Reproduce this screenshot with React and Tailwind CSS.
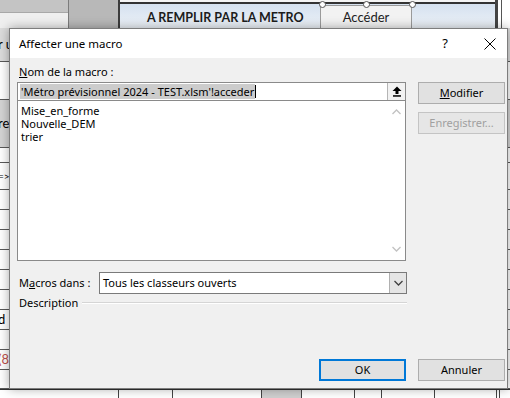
import React from 'react';

const leftRows = [
  { h: 34, bg: 'bg-[#dcdcdc]', text: 'r u', cls: 'text-black' },
  { h: 38, bg: 'bg-white', text: '', cls: '' },
  { h: 48, bg: 'bg-[#d4d4d4]', text: 're', cls: 'text-black' },
  { h: 15, bg: 'bg-white', text: '', cls: '' },
  { h: 27, bg: 'bg-white', text: '=>', cls: 'text-black text-[10px]' },
  { h: 20, bg: 'bg-white', text: '', cls: '' },
  { h: 20, bg: 'bg-white', text: '', cls: '' },
  { h: 20, bg: 'bg-white', text: '', cls: '' },
  { h: 20, bg: 'bg-white', text: '', cls: '' },
  { h: 20, bg: 'bg-white', text: '', cls: '' },
  { h: 20, bg: 'bg-white', text: '', cls: '' },
  { h: 20, bg: 'bg-white', text: 'd', cls: 'text-black' },
  { h: 20, bg: 'bg-white', text: '', cls: '' },
  { h: 20, bg: 'bg-white', text: '(8', cls: 'text-[#c0504d]' },
  { h: 19, bg: 'bg-white', text: '', cls: '' },
];

const bottomCells = [119, 54, 89, 40, 53, 27, 53, 62, 3];

const Button = ({ children, disabled, primary }) => (
  <div
    className={`h-[22px] w-[87px] flex items-center justify-center ${
      primary ? 'border-2 border-[#0078d7] bg-[#e1e1e1]' : 'border'
    } ${
      disabled
        ? 'text-[#a0a0a0] bg-[#e6e6e6] border-[#c4c4c4]'
        : primary
        ? 'text-black'
        : 'text-black bg-[#e1e1e1] border-[#adadad]'
    }`}
  >
    {children}
  </div>
);

export default function App() {
  return (
    <div className="relative w-[510px] h-[398px] overflow-hidden bg-white flex flex-col font-['Lato',sans-serif]">
      {/* sheet: header band */}
      <div className="h-[28px] flex shrink-0">
        <div className="w-[68px] flex flex-col">
          <div className="h-[12px] bg-[#c4c4c4]" />
          <div className="flex-1 bg-[#efefef] border-t border-[#a8a8a8]" />
        </div>
        <div className="w-[50px] bg-[#b8b8b8] border-l border-[#7c7c7c]" />
        <div className="w-[2px] bg-[#3c3c3c]" />
        <div className="w-[375px] flex flex-col">
          <div className="h-[2px] bg-[#f4f4f4]" />
          <div className="flex-1 relative border-t-2 border-[#333333] bg-linear-to-b from-[#d5e1ef] to-[#edf2f8] flex items-start">
            <span className="ml-[27px] mt-[8px] text-[12.5px] font-bold text-[#1c1c1c] leading-none">
              A REMPLIR PAR LA METRO
            </span>
            <div className="absolute left-[200px] top-[1px] w-[92px] h-[30px] bg-[#f2f2f2] border border-[#9a9a9a] flex justify-center">
              <span className="mt-[5px] text-[13px] text-[#222] leading-none">Accéder</span>
            </div>
            <div className="absolute left-[199px] top-[-3px] w-[7px] h-[7px] rounded-full bg-white border border-[#555]" />
            <div className="absolute left-[243px] top-[-3px] w-[7px] h-[7px] rounded-full bg-white border border-[#555]" />
            <div className="absolute left-[289px] top-[-3px] w-[7px] h-[7px] rounded-full bg-white border border-[#555]" />
          </div>
        </div>
        <div className="w-[3px] bg-[#444]" />
        <div className="flex-1 bg-white border-r border-[#555] mr-[8px]" />
      </div>

      {/* sheet: left visible cells */}
      <div className="flex-1 flex flex-col">
        {leftRows.map((r, i) => (
          <div
            key={i}
            style={{ height: r.h }}
            className={`${r.bg} border-b border-[#5a5a5a] flex items-center text-[13px] overflow-hidden`}
          >
            <span className={`-ml-[2px] ${r.cls}`}>{r.text}</span>
          </div>
        ))}
      </div>

      {/* sheet: bottom cells */}
      <div className="h-[9px] flex shrink-0 border-t border-[#333]">
        {bottomCells.map((w, i) => (
          <div
            key={i}
            style={{ width: w }}
            className={`border-r border-[#444] ${i === 3 ? 'bg-[#cfcfcf]' : 'bg-white'}`}
          />
        ))}
        <div className="flex-1 bg-white" />
      </div>

      {/* dialog */}
      <div className="absolute left-[9px] top-[28px] w-[499px] h-[361px] bg-[#f0f0f0] border border-[#7d7d7d] shadow-[0_0_10px_rgba(0,0,0,0.35)] flex flex-col text-[11px] text-black font-['Noto_Sans',sans-serif]">
        <div className="h-[29px] bg-white flex items-center pl-[9px] pr-[11px] shrink-0">
          <span className="flex-1 text-[11.5px]">Affecter une macro</span>
          <span className="text-[13px] mr-[36px]">?</span>
          <svg width="12" height="12" viewBox="0 0 12 12">
            <path d="M0.5 0.5 L11.5 11.5 M11.5 0.5 L0.5 11.5" stroke="#000" strokeWidth="1" />
          </svg>
        </div>

        <div className="flex-1 flex flex-col pl-[7px] pr-[2px] pb-[7px]">
          <div className="pt-[7px] mb-[3px] ml-[2px] h-[14px] leading-[14px] box-content">
            <span className="underline">N</span>om de la macro :
          </div>

          <div className="flex gap-[12px]">
            <div className="w-[389px] flex flex-col">
              <div className="h-[19px] bg-white border border-[#8a8a8a] flex">
                <div className="flex-1 flex items-center pl-[2px]">
                  <span className="bg-[#cccccc] leading-[15px] px-[1px]">
                    'Métro prévisionnel 2024 - TEST.xlsm'!acceder
                  </span>
                  <span className="w-px h-[13px] bg-black" />
                </div>
                <div className="w-[18px] border-l border-[#b5b5b5] bg-[#f2f2f2] flex items-center justify-center">
                  <svg width="10" height="11" viewBox="0 0 10 11">
                    <path d="M5 0.5 L9.5 5 L6.5 5 L6.5 8 L3.5 8 L3.5 5 L0.5 5 Z" fill="#000" />
                    <rect x="1" y="9.2" width="8" height="1.5" fill="#000" />
                  </svg>
                </div>
              </div>
              <div className="h-[161px] -mt-px bg-white border border-[#8a8a8a] flex">
                <div className="flex-1 pt-[3px] pl-[3px] leading-[13px]">
                  <div>Mise_en_forme</div>
                  <div>Nouvelle_DEM</div>
                  <div>trier</div>
                </div>
                <div className="w-[17px] flex flex-col items-center justify-between py-[8px]">
                  <svg width="9" height="6" viewBox="0 0 9 6">
                    <path d="M0.5 5 L4.5 1 L8.5 5" fill="none" stroke="#c2c2c2" strokeWidth="1.3" />
                  </svg>
                  <svg width="9" height="6" viewBox="0 0 9 6">
                    <path d="M0.5 1 L4.5 5 L8.5 1" fill="none" stroke="#c2c2c2" strokeWidth="1.3" />
                  </svg>
                </div>
              </div>
            </div>

            <div className="w-[87px] flex flex-col gap-[8px]">
              <Button>
                <span><span className="underline">M</span>odifier</span>
              </Button>
              <Button disabled>Enregistrer...</Button>
            </div>
          </div>

          <div className="mt-[11px] flex items-center h-[22px]">
            <span className="w-[82px] pl-[2px]">
              M<span className="underline">a</span>cros dans :
            </span>
            <div className="w-[308px] h-[22px] bg-white border border-[#7a7a7a] flex">
              <span className="flex-1 pl-[3px] leading-[20px]">Tous les classeurs ouverts</span>
              <div className="w-[17px] bg-[#e5e5e5] border-l border-[#b0b0b0] flex items-center justify-center">
                <svg width="9" height="6" viewBox="0 0 9 6">
                  <path d="M0.5 1 L4.5 5 L8.5 1" fill="none" stroke="#404040" strokeWidth="1.3" />
                </svg>
              </div>
            </div>
          </div>

          <div className="mt-[2px] w-[390px] flex items-center h-[14px]">
            <span className="ml-[2px]">Description</span>
            <div className="flex-1 ml-[4px] border-t border-[#d5d5d5] border-b border-b-white" />
          </div>

          <div className="flex-1" />

          <div className="flex justify-end gap-[12px]">
            <Button primary>OK</Button>
            <Button>Annuler</Button>
          </div>
        </div>
      </div>
    </div>
  );
}
